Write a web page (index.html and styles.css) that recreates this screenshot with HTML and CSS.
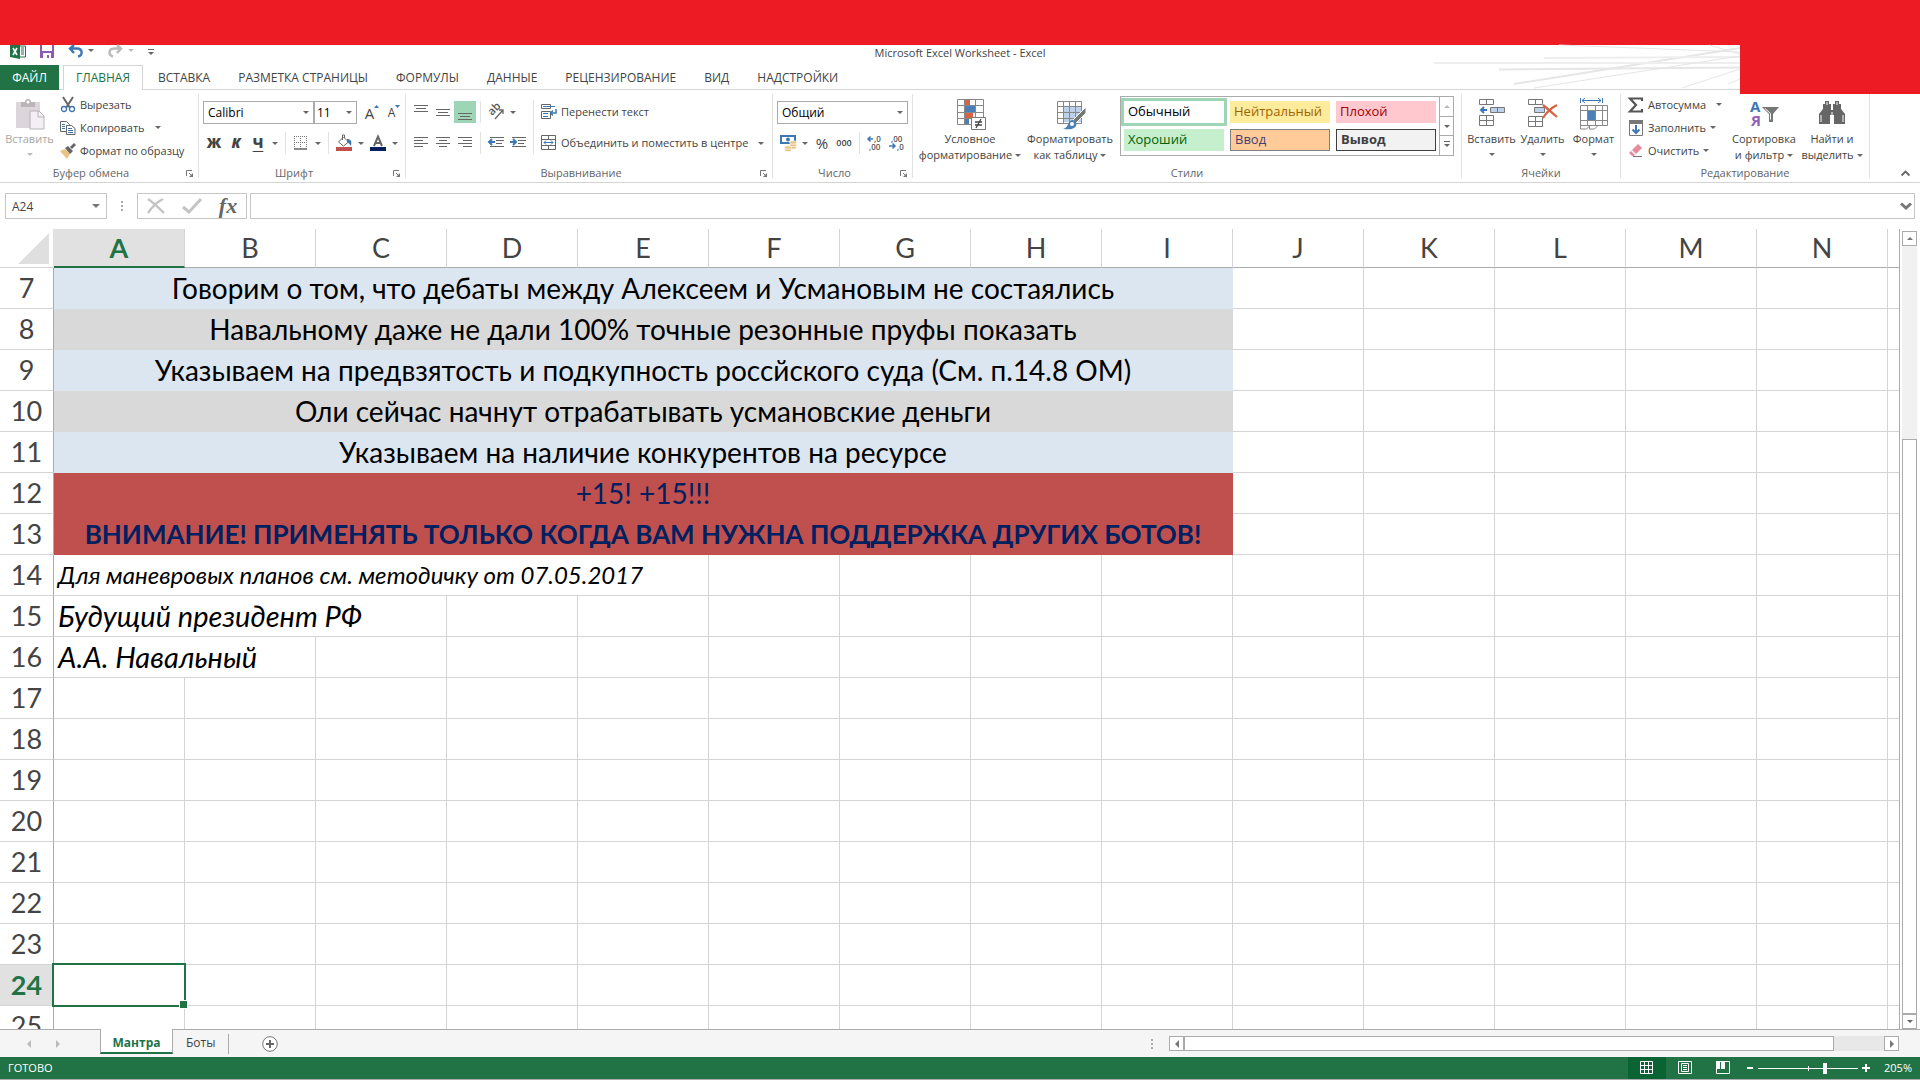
FILE: index.html
```
<!DOCTYPE html>
<html lang="ru">
  <head>
    <meta charset="utf-8">
    <title>Microsoft Excel Worksheet - Excel</title>
    <link rel="stylesheet" href="styles.css">
  </head>
  <body>
    <div class="banner"></div>
    <div class="banner-corner"></div>

    <header class="titlebar">
      <div class="quick-access">
        <svg class="qa-logo" width="16" height="14" viewBox="0 0 16 14"><path d="M9 1h6.500v11H9" fill="#fff" stroke="#217346"/><path d="M11 3h3M11 5h3M11 7h3M11 9h3" stroke="#217346"/><path d="M0 0h10v14L0 12z" fill="#217346"/><path d="M3 3l4 7M7 3l-4 7" stroke="#fff" stroke-width="1.600"/></svg>
        <button type="button" aria-label="Сохранить"><svg width="14" height="13" viewBox="0 0 14 13"><path d="M0 0h2v6h10V0h2v13H0z" fill="#8e5bb0"/><path d="M3 13V8h8v5H9v-3H7v3z" fill="#fff"/></svg></button>
        <button type="button" aria-label="Отменить"><svg width="26" height="13" viewBox="0 0 26 13"><path d="M6 0L2 3.500 6 8M2 3.500h7c6 0 6 7 1 8" fill="none" stroke="#3e77b5" stroke-width="2.400"/><path d="M20 4h6l-3 3z" fill="#666"/></svg></button>
        <button type="button" aria-label="Вернуть"><svg width="26" height="13" viewBox="0 0 26 13"><path d="M9 0l4 3.500L9 8M13 3.500H7C0 3.500 0 10 5 11.500" fill="none" stroke="#bbb" stroke-width="2.400"/><path d="M20 4h6l-3 3z" fill="#bbb"/></svg></button>
        <button type="button" aria-label="Настройка панели"><svg width="6" height="7" viewBox="0 0 6 7"><path d="M0 .5h6" stroke="#666"/><path d="M0 3h6L3 6z" fill="#666"/></svg></button>
      </div>
      <div class="doc-title">Microsoft Excel Worksheet - Excel</div>
      <svg class="streaks" width="306" height="44" viewBox="0 0 306 44"><g fill="none" stroke="#e6e6e6"><path d="M80 39L306 3" stroke-width="2"/><path d="M65 24.500l241-2" stroke-width="2"/><path d="M0 18h306M110 13l196-1" stroke="#eee" stroke-width="2"/><path d="M100 43L306 11M125 0l181 7M275 0l31 9M248 43l58-19M294 39l12-5"/></g></svg>
    </header>

    <nav class="tabs">
      <a class="tab file" href="#">ФАЙЛ</a>
      <a class="tab active" href="#">ГЛАВНАЯ</a>
      <a class="tab" href="#">ВСТАВКА</a>
      <a class="tab" href="#">РАЗМЕТКА СТРАНИЦЫ</a>
      <a class="tab" href="#">ФОРМУЛЫ</a>
      <a class="tab" href="#">ДАННЫЕ</a>
      <a class="tab" href="#">РЕЦЕНЗИРОВАНИЕ</a>
      <a class="tab" href="#">ВИД</a>
      <a class="tab" href="#">НАДСТРОЙКИ</a>
    </nav>

    <div class="ribbon">
      <section class="group clipboard">
        <div class="group-body">
          <button type="button" class="big disabled"><svg width="30" height="31" viewBox="0 0 30 31"><path d="M1 3h24v26H1z" fill="#dcd6db"/><path d="M6 8V3h4a3 3 0 0 1 6 0h4v5z" fill="#b9b5b9"/><circle cx="13" cy="3" r="1.500" fill="#fff"/><path d="M15 12h9l5 5v13H15z" fill="#f4eff5" stroke="#b7b3b7"/><path d="M23 12v6h6" fill="none" stroke="#b7b3b7"/></svg><span>Вставить</span><i class="arrow"></i></button>
          <div class="stack">
            <button type="button" class="small"><svg width="16" height="16" viewBox="0 0 16 16"><path d="M3 0l7 11M13 0L6 11" stroke="#666" stroke-width="2"/><circle cx="4" cy="12" r="2.500" fill="#fff" stroke="#3e77b5" stroke-width="1.300"/><circle cx="12" cy="12" r="2.500" fill="#fff" stroke="#3e77b5" stroke-width="1.300"/></svg>Вырезать</button>
            <button type="button" class="small"><svg width="16" height="16" viewBox="0 0 16 16"><g fill="#fff" stroke="#666"><path d="M.5 1.500h6l3 3v7h-9z"/><path d="M6.500 5.500h5l3.500 3v6H6.500z"/></g><path d="M2 4.500h3M2 6.500h3M2 8.500h3M8 8.500h4M8 10.500h5M8 12.500h5" stroke="#3e77b5"/></svg>Копировать<i class="arrow far"></i></button>
            <button type="button" class="small"><svg width="16" height="16" viewBox="0 0 16 16"><path d="M0 8l5-2 5 5-3 5z" fill="#eac282"/><path d="M5 5l3-2 5 5-3 3zM10 4l4-4 2 2-4 4z" fill="#666"/></svg>Формат по образцу</button>
          </div>
        </div>
        <div class="caption">Буфер обмена</div>
        <button type="button" class="launcher" aria-label="Буфер обмена"><svg width="8" height="8" viewBox="0 0 8 8"><path d="M.5 6V.5H6M3 3l3 3" fill="none" stroke="#777"/><path d="M7 3v4H3z" fill="#777"/></svg></button>
      </section>

      <section class="group font">
        <div class="group-body rows">
          <div class="row">
            <select class="combo font-name" aria-label="Шрифт"><option>Calibri</option></select>
            <select class="combo font-size" aria-label="Размер шрифта"><option>11</option></select>
            <button type="button" class="tool grow" aria-label="Увеличить размер шрифта">A<svg width="5" height="3" viewBox="0 0 5 3"><path d="M0 3h5L2.500 0z" fill="#3e77b5"/></svg></button>
            <button type="button" class="tool shrink" aria-label="Уменьшить размер шрифта">A<svg width="5" height="3" viewBox="0 0 5 3"><path d="M0 0h5L2.500 3z" fill="#3e77b5"/></svg></button>
          </div>
          <div class="row">
            <button type="button" class="tool bold">Ж</button>
            <button type="button" class="tool bold italic">К</button>
            <button type="button" class="tool bold under">Ч</button>
            <button type="button" class="drop" aria-label="Подчеркивание"><i class="arrow"></i></button>
            <i class="sep"></i>
            <button type="button" class="tool" aria-label="Границы"><svg width="14" height="14" viewBox="0 0 14 14"><path d="M.5 0v13M6.500 0v13M12.500 0v13M0 .5h13M0 6.500h13" stroke="#777" stroke-dasharray="1 1"/><path d="M0 13h13" stroke="#666" stroke-width="1.500"/></svg></button>
            <button type="button" class="drop" aria-label="Границы"><i class="arrow"></i></button>
            <i class="sep"></i>
            <button type="button" class="tool" aria-label="Цвет заливки"><svg width="16" height="16" viewBox="0 0 16 16"><path d="M2.500 7l5-5 5 5-5 4z" fill="#fff" stroke="#666"/><path d="M6.500 5V0h2v3" fill="none" stroke="#666"/><path d="M11 4c4 0 5 2 4 7-1-1-2-3-4-4z" fill="#3e77b5"/><path d="M0 12h16v4H0z" fill="#c0504d"/></svg></button>
            <button type="button" class="drop" aria-label="Цвет заливки"><i class="arrow"></i></button>
            <button type="button" class="tool" aria-label="Цвет текста"><svg width="16" height="16" viewBox="0 0 16 16"><path d="M4 11L8 1.500 12 11M5.500 8h5" fill="none" stroke="#666" stroke-width="2"/><path d="M0 12h16v4H0z" fill="#002060"/></svg></button>
            <button type="button" class="drop" aria-label="Цвет текста"><i class="arrow"></i></button>
          </div>
        </div>
        <div class="caption">Шрифт</div>
        <button type="button" class="launcher" aria-label="Шрифт"><svg width="8" height="8" viewBox="0 0 8 8"><path d="M.5 6V.5H6M3 3l3 3" fill="none" stroke="#777"/><path d="M7 3v4H3z" fill="#777"/></svg></button>
      </section>

      <section class="group align">
        <div class="group-body">
          <div class="rows">
            <div class="row">
              <button type="button" class="tool" aria-label="По верхнему краю"><svg width="14" height="16" viewBox="0 0 14 16"><path d="M0 1.500h14M2 4.500h10M0 7.500h14" stroke="#666"/></svg></button>
              <button type="button" class="tool" aria-label="По середине"><svg width="14" height="16" viewBox="0 0 14 16"><path d="M0 5.500h14M2 8.500h10M0 11.500h14" stroke="#666"/></svg></button>
              <button type="button" class="tool pressed" aria-label="По нижнему краю"><svg width="14" height="16" viewBox="0 0 14 16"><path d="M0 9.500h14M2 12.500h10M0 15.500h14" stroke="#666"/></svg></button>
              <i class="sep"></i>
              <button type="button" class="tool" aria-label="Ориентация"><svg width="16" height="16" viewBox="0 0 16 16"><text class="glyph-ab" transform="translate(4 12) rotate(-45)">ab</text><path d="M7 15l8-9M11 6h4v4" fill="none" stroke="#666" stroke-width="1.300"/></svg></button>
              <button type="button" class="drop" aria-label="Ориентация"><i class="arrow"></i></button>
            </div>
            <div class="row">
              <button type="button" class="tool" aria-label="По левому краю"><svg width="14" height="12" viewBox="0 0 14 12"><path d="M0 .5h14M0 3.500h9M0 6.500h14M0 9.500h9" stroke="#666"/></svg></button>
              <button type="button" class="tool" aria-label="По центру"><svg width="14" height="12" viewBox="0 0 14 12"><path d="M0 .5h14M3 3.500h8M0 6.500h14M3 9.500h8" stroke="#666"/></svg></button>
              <button type="button" class="tool" aria-label="По правому краю"><svg width="14" height="12" viewBox="0 0 14 12"><path d="M0 .5h14M5 3.500h9M0 6.500h14M5 9.500h9" stroke="#666"/></svg></button>
              <i class="sep"></i>
              <button type="button" class="tool" aria-label="Уменьшить отступ"><svg width="16" height="12" viewBox="0 0 16 12"><path d="M2 .5h14M8 3.500h8M8 6.500h6M2 9.500h14" stroke="#666"/><path d="M7 5H2M4 2L1 5l3 3" fill="none" stroke="#3e77b5" stroke-width="2"/></svg></button>
              <button type="button" class="tool" aria-label="Увеличить отступ"><svg width="16" height="12" viewBox="0 0 16 12"><path d="M2 .5h14M8 3.500h8M8 6.500h6M2 9.500h14" stroke="#666"/><path d="M0 5h5M3 2l3 3-3 3" fill="none" stroke="#3e77b5" stroke-width="2"/></svg></button>
            </div>
          </div>
          <i class="sep tall"></i>
          <div class="rows">
            <button type="button" class="small"><svg width="16" height="16" viewBox="0 0 16 16"><path d="M.5.5h9v4h-9zM.5 7.500h9v7h-9z" fill="#fff" stroke="#666"/><path d="M2 2.500h12M2 9.500h5M2 12.500h5" stroke="#3e77b5"/><path d="M15 5v4h-5M12 6.500L9.500 9l2.500 2.500" fill="none" stroke="#3e77b5" stroke-width="1.500"/></svg>Перенести текст</button>
            <button type="button" class="small"><svg width="16" height="16" viewBox="0 0 16 16"><path d="M.5.5h14v14H.5zM.5 4.500h14M.5 10.500h14M7.500.5v4M7.500 10.500v4" fill="#fff" stroke="#666"/><path d="M3 7.500h9M5 5.500l-2 2 2 2M10 5.500l2 2-2 2" fill="none" stroke="#3e77b5"/></svg>Объединить и поместить в центре<i class="arrow far"></i></button>
          </div>
        </div>
        <div class="caption">Выравнивание</div>
        <button type="button" class="launcher" aria-label="Выравнивание"><svg width="8" height="8" viewBox="0 0 8 8"><path d="M.5 6V.5H6M3 3l3 3" fill="none" stroke="#777"/><path d="M7 3v4H3z" fill="#777"/></svg></button>
      </section>

      <section class="group number">
        <div class="group-body rows">
          <div class="row">
            <select class="combo format" aria-label="Числовой формат"><option>Общий</option></select>
          </div>
          <div class="row">
            <button type="button" class="tool" aria-label="Финансовый формат"><svg width="17" height="17" viewBox="0 0 17 17"><path d="M1 1h14v7H1z" fill="#fff" stroke="#3e77b5" stroke-width="2"/><circle cx="8" cy="4.500" r="2" fill="#3e77b5"/><g fill="#eac282" stroke="#fff" stroke-width=".7"><ellipse cx="13" cy="12.500" rx="3.500" ry="1.700"/><ellipse cx="13" cy="10" rx="3.500" ry="1.700"/><ellipse cx="13" cy="7.500" rx="3.500" ry="1.700"/><ellipse cx="8" cy="15" rx="3.500" ry="1.700"/><ellipse cx="8" cy="12.500" rx="3.500" ry="1.700"/></g></svg></button>
            <button type="button" class="drop" aria-label="Финансовый формат"><i class="arrow"></i></button>
            <button type="button" class="tool percent">%</button>
            <button type="button" class="tool thousands">000</button>
            <i class="sep"></i>
            <button type="button" class="tool" aria-label="Увеличить разрядность"><svg width="16" height="16" viewBox="0 0 16 16"><text class="glyph-dec" x="7" y="7">,0</text><text class="glyph-dec" x="2" y="15">,00</text><path d="M6 4H1M3.500 1.500L1 4l2.500 2.500" fill="none" stroke="#3e77b5" stroke-width="1.500"/></svg></button>
            <button type="button" class="tool" aria-label="Уменьшить разрядность"><svg width="16" height="16" viewBox="0 0 16 16"><text class="glyph-dec" x="2" y="7">,00</text><text class="glyph-dec" x="8" y="15">,0</text><path d="M0 11h6M3.500 8.500L6 11l-2.500 2.500" fill="none" stroke="#3e77b5" stroke-width="1.500"/></svg></button>
          </div>
        </div>
        <div class="caption">Число</div>
        <button type="button" class="launcher" aria-label="Число"><svg width="8" height="8" viewBox="0 0 8 8"><path d="M.5 6V.5H6M3 3l3 3" fill="none" stroke="#777"/><path d="M7 3v4H3z" fill="#777"/></svg></button>
      </section>

      <section class="group styles">
        <div class="group-body">
          <button type="button" class="big wide"><svg width="30" height="31" viewBox="0 0 30 31"><path d="M.5.500h26v25H.5zM7.500.5v25M18.500.5v25M.5 6.500h26M.5 13.500h26M.5 19.500h26" fill="#fff" stroke="#888"/><path d="M8 1h5v5H8zM8 14h8v5H8z" fill="#d86344"/><path d="M8 7h10v6H8zM8 20h4v5H8z" fill="#4a7fb8"/><path d="M14.500 18.500h14v12h-14z" fill="#fff" stroke="#777"/><path d="M18 23h7M18 26h7M24 20l-5 9" stroke="#444" stroke-width="1.300"/></svg><span>Условное<br>форматирование<i class="arrow"></i></span></button>
          <button type="button" class="big wide"><svg width="30" height="31" viewBox="0 0 30 31"><path d="M7 8h17v15H7z" fill="#bdd2ea"/><path d="M.5 2.500h24v22H.5zM6.500 2.500v22M12.500 2.500v22M18.500 2.500v22M.5 7.500h24M.5 13.500h24M.5 19.500h24" fill="none" stroke="#888"/><path d="M29 8v6L19 24l-3-3z" fill="#777" stroke="#fff"/><path d="M6 30c6-1 4-8 9-9 5 0 6 6 2 8-3 2-7 1-11 1z" fill="#4a7fb8"/><circle cx="15" cy="25" r="2" fill="#fff"/></svg><span>Форматировать<br>как таблицу<i class="arrow"></i></span></button>
          <div class="gallery">
            <div class="gallery-items">
              <button type="button" class="style normal">Обычный</button>
              <button type="button" class="style neutral">Нейтральный</button>
              <button type="button" class="style bad">Плохой</button>
              <button type="button" class="style good">Хороший</button>
              <button type="button" class="style input">Ввод</button>
              <button type="button" class="style output">Вывод</button>
            </div>
            <div class="gallery-scroll">
              <button type="button" class="off" aria-label="Вверх"><i class="arrow up"></i></button>
              <button type="button" aria-label="Вниз"><i class="arrow"></i></button>
              <button type="button" aria-label="Все стили"><i class="arrow lined"></i></button>
            </div>
          </div>
        </div>
        <div class="caption">Стили</div>
      </section>

      <section class="group cells">
        <div class="group-body">
          <button type="button" class="big"><svg width="30" height="31" viewBox="0 0 30 31"><g fill="#fff" stroke="#777"><path d="M2.500.5h14v5h-14zM9.500.5v5M2.500 16.500h14v10h-14zM9.500 16.500v10M2.500 21.500h14"/><path d="M13.500 8.500h14v5h-14zM20.500 8.500v5" fill="#bdd2ea"/></g><path d="M10 11H4M7 8l-3 3 3 3" fill="none" stroke="#3e77b5" stroke-width="2"/></svg><span>Вставить</span><i class="arrow"></i></button>
          <button type="button" class="big"><svg width="30" height="31" viewBox="0 0 30 31"><g fill="#fff" stroke="#777"><path d="M.5.5h14v5H.5zM7.500.5v5M.5 17.500h14v10H.5zM7.500 17.500v10M.5 22.500h14"/><path d="M6.500 8.500h10v5h-10z" fill="#bdd2ea"/></g><path d="M15 6c4 3 9 8 14 12M29 6C23 9 18 14 15 19" fill="none" stroke="#d86344" stroke-width="2.200"/></svg><span>Удалить</span><i class="arrow"></i></button>
          <button type="button" class="big"><svg width="30" height="33" viewBox="0 0 30 33"><path d="M1.500 0v5M23.500 0v5M3 2.500h19M6 0L3 2.500 6 5M19 0l3 2.500L19 5" fill="none" stroke="#3e77b5"/><path d="M1.500 7.500h27v20h-27zM8.500 7.500v20M16.500 7.500v20M23.500 7.500v20M1.500 12.500h27M1.500 22.500h27" fill="#fff" stroke="#888"/><path d="M9 13h7v9H9z" fill="#4a7fb8"/><path d="M1.500 27v4h6l3-3v3h5l4-4" fill="none" stroke="#888"/></svg><span>Формат</span><i class="arrow"></i></button>
        </div>
        <div class="caption">Ячейки</div>
      </section>

      <section class="group editing">
        <div class="group-body">
          <div class="stack">
            <button type="button" class="small"><svg width="16" height="16" viewBox="0 0 16 16"><path d="M14 4V1.500H2L8 8l-6 6.500h12V12" fill="none" stroke="#555" stroke-width="2.200"/></svg>Автосумма<i class="arrow far"></i></button>
            <button type="button" class="small"><svg width="16" height="16" viewBox="0 0 16 16"><path d="M1.500.5h13v15h-13z" fill="#fff" stroke="#777"/><path d="M1 0h14v4H1z" fill="#777"/><path d="M8 5v8M4.500 9.500L8 13l3.500-3.500" fill="none" stroke="#3e77b5" stroke-width="2"/></svg>Заполнить<i class="arrow"></i></button>
            <button type="button" class="small"><svg width="16" height="16" viewBox="0 0 16 16"><path d="M4 7l6-6 4 4-6 6z" fill="#e68a9c"/><path d="M3 8l4 4-1 1H4L1 10z" fill="#e68a9c"/><path d="M5 13.500h9" stroke="#777"/></svg>Очистить<i class="arrow"></i></button>
          </div>
          <button type="button" class="big sort"><svg width="30" height="31" viewBox="0 0 30 31"><text class="glyph-a" x="1" y="13">А</text><text class="glyph-ya" x="2" y="27">Я</text><path d="M13 8h17l-6 7v8h-4v-8z" fill="#777"/><path d="M16 9.500l5.500 5v6" fill="none" stroke="#fff"/></svg><span>Сортировка<br>и фильтр<i class="arrow"></i></span></button>
          <button type="button" class="big find"><svg width="28" height="31" viewBox="0 0 28 31"><path d="M7 2h4v3h2v6h2V5h2V2h4v3h2v5l4 5v10H16v-9h-4v9H1V15l4-5V5h2z" fill="#666"/><path d="M9 3v3M19 3v3M14 13v3M3 16v7M25 16v7" stroke="#fff"/></svg><span>Найти и<br>выделить<i class="arrow"></i></span></button>
        </div>
        <div class="caption">Редактирование</div>
      </section>

      <button type="button" class="collapse" aria-label="Свернуть ленту"><svg width="9" height="6" viewBox="0 0 9 6"><path d="M.5 5.500l4-4 4 4" fill="none" stroke="#666" stroke-width="1.800"/></svg></button>
    </div>

    <div class="formula-bar">
      <input class="name-box" type="text" value="A24" aria-label="Имя">
      <svg class="dots" width="2" height="10" viewBox="0 0 2 10"><path d="M0 0h2v2H0zM0 4h2v2H0zM0 8h2v2H0z" fill="#aaa"/></svg>
      <div class="formula-tools">
        <button type="button" aria-label="Отмена"><svg width="18" height="16" viewBox="0 0 18 16"><path d="M1 1c6 4 11 9 16 14M16 1C10 4 5 9 1 15" fill="none" stroke="#c4c4c4" stroke-width="2.400"/></svg></button>
        <button type="button" aria-label="Ввод"><svg width="20" height="16" viewBox="0 0 20 16"><path d="M1 9l6 5L19 1" fill="none" stroke="#c4c4c4" stroke-width="3"/></svg></button>
        <button type="button" class="fx" aria-label="Вставить функцию">fx</button>
      </div>
      <div class="formula">
        <input type="text" aria-label="Строка формул">
        <button type="button" aria-label="Развернуть"><svg width="12" height="8" viewBox="0 0 12 8"><path d="M1 1.500l5 4.500 5-4.500" fill="none" stroke="#777" stroke-width="3"/></svg></button>
      </div>
    </div>

    <main class="workspace">
      <div class="sheet">
        <table class="grid">
          <colgroup><col class="c-head"><col span="14" class="c-cell"><col></colgroup>
          <thead>
            <tr><th class="corner"><svg width="31" height="31" viewBox="0 0 31 31"><path d="M31 0v31H0z" fill="#dfdfdf"/></svg></th><th class="current">A</th><th>B</th><th>C</th><th>D</th><th>E</th><th>F</th><th>G</th><th>H</th><th>I</th><th>J</th><th>K</th><th>L</th><th>M</th><th>N</th><th></th></tr>
          </thead>
          <tbody>
            <tr><th>7</th><td colspan="9" class="blue">Говорим о том, что дебаты между Алексеем и Усмановым не состаялись</td><td></td><td></td><td></td><td></td><td></td><td></td></tr>
            <tr><th>8</th><td colspan="9" class="grey">Навальному даже не дали 100% точные резонные пруфы показать</td><td></td><td></td><td></td><td></td><td></td><td></td></tr>
            <tr><th>9</th><td colspan="9" class="blue">Указываем на предвзятость и подкупность россйского суда (См. п.14.8 ОМ)</td><td></td><td></td><td></td><td></td><td></td><td></td></tr>
            <tr><th>10</th><td colspan="9" class="grey">Оли сейчас начнут отрабатывать усмановские деньги</td><td></td><td></td><td></td><td></td><td></td><td></td></tr>
            <tr><th>11</th><td colspan="9" class="blue">Указываем на наличие конкурентов на ресурсе</td><td></td><td></td><td></td><td></td><td></td><td></td></tr>
            <tr><th>12</th><td colspan="9" class="red">+15! +15!!!</td><td></td><td></td><td></td><td></td><td></td><td></td></tr>
            <tr><th>13</th><td colspan="9" class="red strong">ВНИМАНИЕ! ПРИМЕНЯТЬ ТОЛЬКО КОГДА ВАМ НУЖНА ПОДДЕРЖКА ДРУГИХ БОТОВ!</td><td></td><td></td><td></td><td></td><td></td><td></td></tr>
            <tr><th>14</th><td colspan="5" class="note fine">Для маневровых планов см. методичку от 07.05.2017</td><td></td><td></td><td></td><td></td><td></td><td></td><td></td><td></td><td></td><td></td></tr>
            <tr><th>15</th><td colspan="3" class="note">Будущий президент РФ</td><td></td><td></td><td></td><td></td><td></td><td></td><td></td><td></td><td></td><td></td><td></td><td></td></tr>
            <tr><th>16</th><td colspan="2" class="note">А.А. Навальный</td><td></td><td></td><td></td><td></td><td></td><td></td><td></td><td></td><td></td><td></td><td></td><td></td><td></td></tr>
            <tr><th>17</th><td></td><td></td><td></td><td></td><td></td><td></td><td></td><td></td><td></td><td></td><td></td><td></td><td></td><td></td><td></td></tr>
            <tr><th>18</th><td></td><td></td><td></td><td></td><td></td><td></td><td></td><td></td><td></td><td></td><td></td><td></td><td></td><td></td><td></td></tr>
            <tr><th>19</th><td></td><td></td><td></td><td></td><td></td><td></td><td></td><td></td><td></td><td></td><td></td><td></td><td></td><td></td><td></td></tr>
            <tr><th>20</th><td></td><td></td><td></td><td></td><td></td><td></td><td></td><td></td><td></td><td></td><td></td><td></td><td></td><td></td><td></td></tr>
            <tr><th>21</th><td></td><td></td><td></td><td></td><td></td><td></td><td></td><td></td><td></td><td></td><td></td><td></td><td></td><td></td><td></td></tr>
            <tr><th>22</th><td></td><td></td><td></td><td></td><td></td><td></td><td></td><td></td><td></td><td></td><td></td><td></td><td></td><td></td><td></td></tr>
            <tr><th>23</th><td></td><td></td><td></td><td></td><td></td><td></td><td></td><td></td><td></td><td></td><td></td><td></td><td></td><td></td><td></td></tr>
            <tr><th class="current">24</th><td class="selected"></td><td></td><td></td><td></td><td></td><td></td><td></td><td></td><td></td><td></td><td></td><td></td><td></td><td></td><td></td></tr>
            <tr><th>25</th><td></td><td></td><td></td><td></td><td></td><td></td><td></td><td></td><td></td><td></td><td></td><td></td><td></td><td></td><td></td></tr>
          </tbody>
        </table>
      </div>
      <div class="vscroll">
        <button type="button" aria-label="Вверх"><i class="arrow up"></i></button>
        <div class="vtrack"></div>
        <div class="vthumb"></div>
        <button type="button" aria-label="Вниз"><i class="arrow"></i></button>
      </div>
    </main>

    <div class="sheet-bar">
      <div class="sheet-nav">
        <button type="button" aria-label="Предыдущий лист"><i class="arrow left"></i></button>
        <button type="button" aria-label="Следующий лист"><i class="arrow right"></i></button>
      </div>
      <a class="sheet-tab active" href="#">Мантра</a>
      <a class="sheet-tab" href="#">Боты</a>
      <button type="button" class="add-sheet" aria-label="Новый лист"><svg width="16" height="16" viewBox="0 0 16 16"><circle cx="8" cy="8" r="7.300" fill="#fff" stroke="#777"/><path d="M8 4v8M4 8h8" stroke="#666" stroke-width="2"/></svg></button>
      <svg class="bar-dots" width="2" height="10" viewBox="0 0 2 10"><path d="M0 0h2v2H0zM0 4h2v2H0zM0 8h2v2H0z" fill="#aaa"/></svg>
      <div class="hscroll">
        <button type="button" aria-label="Влево"><i class="arrow left"></i></button>
        <div class="hthumb"></div>
        <div class="htrack"></div>
        <button type="button" aria-label="Вправо"><i class="arrow right"></i></button>
      </div>
    </div>

    <footer class="status">
      <span class="state">ГОТОВО</span>
      <button type="button" class="view on" aria-label="Обычный"><svg width="14" height="14" viewBox="0 0 14 14"><path d="M.5.5h12v12H.5zM4.500.5v12M8.500.5v12M.5 4.500h12M.5 8.500h12" fill="none" stroke="#fff"/></svg></button>
      <button type="button" class="view" aria-label="Разметка страницы"><svg width="14" height="14" viewBox="0 0 14 14"><path d="M.5.5h13v12H.5zM3.500 2.500h7v8h-7zM5 4.500h4M5 6.500h4M5 8.500h4" fill="none" stroke="#fff"/></svg></button>
      <button type="button" class="view" aria-label="Страничный режим"><svg width="14" height="14" viewBox="0 0 14 14"><path d="M.5.5h13v12H.5z" fill="none" stroke="#fff"/><path d="M0 0h4v8H0zM5 0h4v8H5z" fill="#fff"/></svg></button>
      <button type="button" class="zoom-step" aria-label="Уменьшить"><svg width="8" height="8" viewBox="0 0 8 8"><path d="M1 4h6" stroke="#fff" stroke-width="2"/></svg></button>
      <input class="zoom" type="range" min="0" max="100" value="68" aria-label="Масштаб">
      <button type="button" class="zoom-step" aria-label="Увеличить"><svg width="8" height="8" viewBox="0 0 8 8"><path d="M0 4h8M4 0v8" stroke="#fff" stroke-width="2"/></svg></button>
      <span class="percent-value">205%</span>
    </footer>
  </body>
</html>
```
FILE: styles.css
```
* {
  box-sizing: border-box;
}

body {
  display: flex;
  flex-direction: column;
  height: 100vh;
  margin: 0;
  overflow: hidden;
  background: #fff;
  color: #444;
  font: 12px/16px "Open Sans", "Noto Sans", sans-serif;
}

button {
  display: flex;
  align-items: center;
  justify-content: center;
  flex: none;
  margin: 0;
  padding: 0;
  border: 0;
  background: none;
  color: inherit;
  font: inherit;
}

svg {
  display: block;
  flex: none;
  overflow: visible;
}

a {
  color: inherit;
  text-decoration: none;
}

/* Small triangle used by all drop-downs and scroll buttons */
.arrow {
  display: inline-block;
  flex: none;
  border: 3px solid transparent;
  border-top-color: #666;
  border-bottom-width: 0;
}

.arrow.up {
  border: 3px solid transparent;
  border-bottom-color: #777;
  border-top-width: 0;
}

.arrow.left {
  border: 4px solid transparent;
  border-right-color: #777;
  border-left-width: 0;
}

.arrow.right {
  border: 4px solid transparent;
  border-left-color: #777;
  border-right-width: 0;
}

.arrow.lined {
  position: relative;
}

.arrow.lined::before {
  content: "";
  position: absolute;
  left: -3px;
  top: -6px;
  width: 6px;
  height: 1px;
  background: #666;
}

/* Red cover over the top of the window */
.banner {
  flex: none;
  height: 45px;
  background: #ed1c24;
}

.banner-corner {
  position: absolute;
  top: 0;
  right: 0;
  z-index: 2;
  width: 180px;
  height: 94px;
  background: #ed1c24;
}

/* Title bar */
.titlebar {
  display: grid;
  grid-template-columns: 1fr auto 1fr;
  flex: none;
  height: 20px;
}

.quick-access {
  display: flex;
  align-items: flex-start;
  gap: 14px;
  padding-left: 10px;
}

.quick-access button:last-child {
  padding-top: 4px;
}

.doc-title {
  font-size: 11px;
}

.streaks {
  position: absolute;
  top: 45px;
  right: 180px;
}

/* Ribbon tabs */
.tabs {
  display: flex;
  flex: none;
  height: 25px;
  border-bottom: 1px solid #d4d4d4;
}

.tab {
  padding: 0 14px;
  line-height: 25px;
}

.tab.file {
  width: 59px;
  height: 25px;
  margin-right: 4px;
  padding: 0;
  background: #217346;
  color: #fff;
  text-align: center;
}

.tab.active {
  width: 80px;
  height: 25px;
  margin-right: 1px;
  padding: 0;
  border: 1px solid #d4d4d4;
  border-bottom: 0;
  background: #fff;
  color: #217346;
  line-height: 24px;
  text-align: center;
}

/* Ribbon */
.ribbon {
  display: flex;
  flex: none;
  height: 93px;
  border-bottom: 1px solid #d4d4d4;
}

.group {
  position: relative;
  display: flex;
  flex-direction: column;
  flex: none;
  margin: 4px 0;
  border-right: 1px solid #e1e1e1;
}

.group-body {
  display: flex;
  flex: 1;
  padding: 0 4px;
}

.caption {
  height: 10px;
  padding-right: 16px;
  color: #666;
  font-size: 11px;
  line-height: 10px;
  text-align: center;
}

.styles .caption,
.cells .caption,
.editing .caption {
  padding-right: 0;
}

.launcher {
  position: absolute;
  right: 4px;
  bottom: 0;
  height: 8px;
}

.clipboard {
  width: 199px;
}

.font {
  width: 207px;
}

.font .group-body {
  padding-right: 0;
}

.align {
  width: 367px;
}

.number {
  width: 140px;
}

.styles {
  width: 549px;
}

.cells {
  width: 159px;
}

.editing {
  width: 249px;
}

.stack {
  display: flex;
  flex-direction: column;
  flex: none;
}

.clipboard .stack {
  padding-left: 5px;
}

.small {
  justify-content: flex-start;
  gap: 4px;
  height: 23px;
  font-size: 11px;
  white-space: nowrap;
}

.stack .small {
  padding-bottom: 2px;
}

.small .arrow.far {
  margin-left: 6px;
}

.big {
  flex-direction: column;
  justify-content: flex-start;
  width: 51px;
  padding-top: 4px;
  font-size: 11px;
  white-space: nowrap;
}

.big svg {
  height: 33px;
}

.big > .arrow {
  margin-top: 6px;
}

.big span .arrow {
  margin: 0 0 2px 3px;
}

.big.disabled {
  color: #a6a6a6;
}

.big.disabled .arrow {
  border-top-color: #bbb;
}

.rows {
  display: flex;
  flex-direction: column;
  gap: 9px;
  padding-top: 7px;
}

.row {
  display: flex;
  height: 22px;
}

.rows .small {
  height: 22px;
}

.sep {
  flex: none;
  width: 1px;
  margin: 0 4px;
  background: #e1e1e1;
}

.sep.tall {
  height: 54px;
  margin: 6px 7px 0 4px;
}

.align .row:first-child {
  width: 119px;
}

.tool {
  width: 22px;
  height: 22px;
}

.tool.pressed {
  background: #9fd5b7;
}

.drop {
  width: 12px;
}

.bold {
  font-size: 14px;
  font-weight: 800;
}

.italic {
  font-style: italic;
}

.under {
  text-decoration: underline;
  text-underline-offset: 3px;
}

.grow,
.shrink {
  align-items: flex-start;
  font-size: 15px;
  line-height: 24px;
}

.grow {
  margin-left: 4px;
}

.shrink {
  font-size: 12px;
}

.grow svg,
.shrink svg {
  margin-top: 4px;
}

.percent {
  font-size: 15px;
}

.thousands {
  font-size: 9px;
  font-weight: 600;
}

.glyph-ab {
  fill: #555;
  font-size: 11px;
  font-weight: 600;
}

.glyph-dec {
  fill: #555;
  font-size: 8px;
  font-weight: 600;
}

.glyph-a,
.glyph-ya {
  fill: #3e77b5;
  font-size: 15px;
  font-weight: 700;
}

.glyph-ya {
  fill: #9260b8;
}

.combo {
  flex: none;
  height: 23px;
  padding: 0 4px;
  border: 1px solid #ababab;
  border-radius: 0;
  appearance: none;
  background: #fff url("data:image/svg+xml,%3Csvg xmlns='http://www.w3.org/2000/svg' width='6' height='3'%3E%3Cpath d='M0 0h6L3 3z' fill='%23666'/%3E%3C/svg%3E") no-repeat right 4px center;
  color: #000;
  font: inherit;
}

.font-name {
  width: 111px;
}

.font-size {
  width: 43px;
  padding: 0 2px;
}

.format {
  width: 131px;
}

/* Cell styles gallery */
.styles .group-body {
  padding: 0 7px;
}

.big.wide {
  width: 100px;
}

.big.wide svg {
  margin-left: 4px;
}

.gallery {
  display: flex;
  flex: 1;
  height: 60px;
  margin-top: 2px;
  border: 1px solid #ababab;
}

.gallery-items {
  display: grid;
  grid-template-columns: repeat(3, 1fr);
  align-content: start;
  gap: 6px;
  flex: 1;
  padding: 4px 3px;
}

.style {
  justify-content: flex-start;
  height: 22px;
  padding: 0 0 2px 4px;
  font-size: 13px;
}

.style.normal {
  outline: 3px solid #9fd5b7;
  color: #000;
}

.style.neutral {
  background: #ffeb9c;
  color: #9c6500;
}

.style.bad {
  background: #ffc7ce;
  color: #9c0006;
}

.style.good {
  background: #c6efce;
  color: #006100;
}

.style.input {
  border: 1px solid #7f7f7f;
  background: #ffcc99;
  color: #3f3f76;
}

.style.output {
  border: 1px solid #3f3f3f;
  background: #f2f2f2;
  color: #3f3f3f;
  font-weight: 700;
}

.gallery-scroll {
  display: flex;
  flex-direction: column;
  width: 14px;
  border-left: 1px solid #ababab;
}

.gallery-scroll button {
  flex: 1;
}

.gallery-scroll button + button {
  border-top: 1px solid #ababab;
}

.gallery-scroll .off .arrow {
  border-bottom-color: #bbb;
}

.editing .stack {
  width: 104px;
  padding-left: 3px;
}

.big.sort {
  width: 70px;
}

.big.find {
  width: 66px;
}

.collapse {
  align-self: flex-end;
  margin: 0 10px 6px auto;
}

/* Formula bar */
.formula-bar {
  display: flex;
  align-items: center;
  flex: none;
  height: 46px;
  padding: 0 5px;
}

.name-box {
  width: 102px;
  height: 26px;
  padding: 0 6px;
  border: 1px solid #c6c6c6;
  background: #fff url("data:image/svg+xml,%3Csvg xmlns='http://www.w3.org/2000/svg' width='8' height='4'%3E%3Cpath d='M0 0h8L4 4z' fill='%23777'/%3E%3C/svg%3E") no-repeat right 6px center;
  color: #444;
  font: inherit;
}

.dots {
  margin: 0 14px;
}

.formula-tools {
  display: flex;
  width: 110px;
  height: 26px;
  border: 1px solid #c6c6c6;
}

.formula-tools button {
  flex: 1;
}

.fx {
  color: #666;
  font: italic 700 22px/22px "Liberation Serif", serif;
}

.formula {
  display: flex;
  flex: 1;
  height: 26px;
  margin-left: 3px;
  border: 1px solid #c6c6c6;
}

.formula input {
  flex: 1;
  min-width: 0;
  border: 0;
  outline: 0;
}

.formula button {
  width: 16px;
}

/* Worksheet */
.workspace {
  display: flex;
  flex: 1;
  min-height: 0;
}

.sheet {
  flex: 1;
  min-width: 0;
  overflow: hidden;
  border-right: 1px solid #ababab;
}

.grid {
  width: 100%;
  table-layout: fixed;
  border-spacing: 0;
  color: #000;
  font: 28px/38px Lato, "Open Sans", sans-serif;
}

.c-head {
  width: 54px;
}

.c-cell {
  width: 131px;
}

.grid th {
  padding: 0;
  color: #444;
  font-size: 27px;
  font-weight: 400;
}

.grid thead th {
  height: 39px;
  border-right: 1px solid #d4d4d4;
  border-bottom: 1px solid #ababab;
  line-height: 36px;
}

.grid thead .corner {
  padding: 0 4px 3px 0;
  border-right-color: #e1e1e1;
  border-bottom-color: #d4d4d4;
  vertical-align: bottom;
}

.corner svg {
  margin-left: auto;
}

.grid thead .current {
  border-bottom: 2px solid #217346;
}

.grid .current {
  background: #e1e1e1;
  color: #217346;
  font-weight: 700;
}

.grid td {
  height: 41px;
  padding: 0;
  border-right: 1px solid #d4d4d4;
  border-bottom: 1px solid #d4d4d4;
  text-align: center;
  white-space: nowrap;
}

.grid td:last-child,
.grid thead th:last-child {
  border-right: 0;
}

.grid tbody th {
  height: 41px;
  border-right: 1px solid #ababab;
  border-bottom: 1px solid #d4d4d4;
}

.grid .blue {
  border-color: #dce6f1;
  background: #dce6f1;
}

.grid .grey {
  border-color: #d9d9d9;
  background: #d9d9d9;
}

.grid .red {
  border-color: #c0504d;
  background: #c0504d;
  color: #002060;
}

.grid .strong {
  font-size: 26px;
  font-weight: 700;
}

.grid .note {
  padding-left: 4px;
  font-size: 29px;
  font-style: italic;
  text-align: left;
}

.grid .fine {
  font-size: 24px;
}

.selected {
  position: relative;
}

/* Selection frame and its fill handle lie over the gridlines */
.selected::before {
  content: "";
  position: absolute;
  inset: -2px;
  border: 2px solid #217346;
}

.selected::after {
  content: "";
  position: absolute;
  right: -4px;
  bottom: -4px;
  width: 7px;
  height: 7px;
  border: 1px solid #fff;
  background: #217346;
}

/* Scroll bars */
.vscroll {
  display: flex;
  flex-direction: column;
  width: 20px;
  padding: 2px 2px 0 2px;
}

.vscroll button,
.hscroll button {
  width: 15px;
  height: 15px;
  border: 1px solid #ababab;
  background: #fff;
}

.vtrack {
  flex: 193;
  width: 15px;
  background: #f1f1f1;
}

.vthumb {
  flex: 575;
  width: 15px;
  border: 1px solid #ababab;
}

.sheet-bar {
  display: flex;
  flex: none;
  height: 28px;
  padding-right: 21px;
  border-top: 1px solid #ababab;
  background: #f5f5f5;
}

.sheet-nav {
  display: flex;
  align-items: center;
  gap: 25px;
  width: 100px;
  padding-left: 27px;
}

.sheet-nav .left {
  border-right-color: #bbb;
}

.sheet-nav .right {
  border-left-color: #bbb;
}

.sheet-tab {
  height: 20px;
  margin-top: 4px;
  padding: 0 13px;
  border-right: 1px solid #ababab;
  line-height: 18px;
}

.sheet-tab.active {
  width: 73px;
  height: 25px;
  margin-top: -1px;
  padding: 0;
  border: 1px solid #ababab;
  border-top: 0;
  border-bottom: 2px solid #217346;
  background: #fff;
  color: #217346;
  font-weight: 700;
  line-height: 28px;
  text-align: center;
}

.add-sheet {
  margin-left: 33px;
}

.bar-dots {
  align-self: center;
  margin-left: auto;
}

.hscroll {
  display: flex;
  width: 730px;
  margin: 6px 0 0 16px;
}

.hthumb {
  flex: 650;
  height: 15px;
  border: 1px solid #ababab;
  background: #fff;
}

.htrack {
  flex: 50;
  height: 15px;
  background: #e8e8e8;
}

/* Status bar */
.status {
  display: flex;
  align-items: center;
  flex: none;
  height: 23px;
  padding: 0 8px;
  border-bottom: 1px solid #ababab;
  background: #217346;
  color: #fff;
  font-size: 11px;
}

.state {
  flex: 1;
}

.view {
  width: 38px;
  height: 22px;
}

.view.on {
  background: #0a6332;
}

.zoom-step {
  width: 8px;
}

.view + .zoom-step {
  margin-left: 4px;
}

.zoom {
  width: 100px;
  height: 12px;
  margin: 0 4px;
  appearance: none;
  background: linear-gradient(#fff, #fff) center / 100% 1px no-repeat, linear-gradient(#fff, #fff) center / 1px 5px no-repeat;
}

.zoom::-webkit-slider-thumb {
  width: 4px;
  height: 11px;
  appearance: none;
  background: #fff;
}

.percent-value {
  margin-left: 14px;
}
```
